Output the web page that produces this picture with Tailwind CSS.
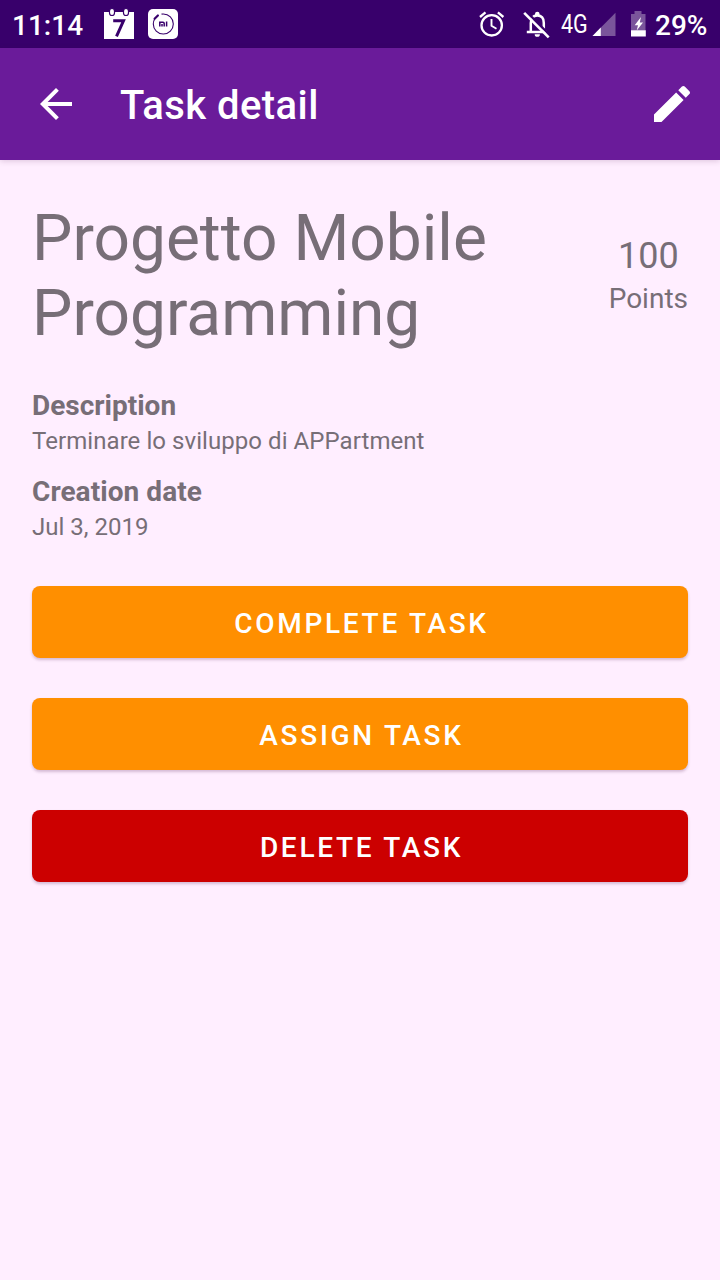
<!DOCTYPE html>
<html lang="it">
<head>
<meta charset="utf-8">
<title>Task detail</title>
<script src="https://cdn.jsdelivr.net/npm/@tailwindcss/browser@4"></script>
</head>
<body class="flex h-[1280px] w-[720px] flex-col overflow-hidden bg-[#ffeeff] font-['Roboto',sans-serif] text-[#776e77]">
  <!-- Status bar -->
  <div class="flex h-12 shrink-0 items-center justify-between bg-[#38006b] text-white">
    <div class="flex items-center pl-3">
      <span class="w-[92px] pt-0.5 text-[28px] leading-[33px] font-medium">11:14</span>
      <svg class="h-12 w-[30px]" viewBox="104 0 30 48">
        <path d="M104 12h30v27h-30z" fill="#fff"/>
        <rect x="109.5" y="8.500" width="5" height="7" rx="2.5" fill="#fff" stroke="#38006b" stroke-width="1.2"/>
        <rect x="123.500" y="8.500" width="5" height="7" rx="2.5" fill="#fff" stroke="#38006b" stroke-width="1.2"/>
        <path d="M113.200 20.800H123.500L116.500 36.300" fill="none" stroke="#38006b" stroke-width="3"/>
      </svg>
      <svg class="ml-3.5 h-12 w-[30px]" viewBox="148 0 30 48">
        <rect x="148" y="9" width="30" height="30" rx="5" fill="#fff"/>
        <circle cx="163.300" cy="24" r="10" fill="none" stroke="#38006b" stroke-width="1.100" stroke-dasharray="36.500 8.500 17.800 0"/>
        <path d="M154.600 18.800l3.300-3.300" stroke="#38006b" stroke-width="2.200" stroke-linecap="round"/>
        <path d="M159.800 26.500V22.300H163Q164.200 22.300 164.200 23.500V26.500M162 24v2.500M166.600 21.500v5" fill="none" stroke="#38006b" stroke-width="1.500"/>
      </svg>
    </div>
    <div class="flex items-center pr-3">
      <svg class="h-12 w-[26px]" viewBox="479 0 26 48" fill="none" stroke="#fff">
        <circle cx="491.700" cy="25.300" r="10.200" stroke-width="2.300"/>
        <path d="M491.500 19v6.800l5 3" stroke-width="1.900"/>
        <path d="M480 17l5.500-4.600M503.400 17l-5.500-4.600" stroke-width="2.300"/>
      </svg>
      <svg class="ml-[18px] h-12 w-[28px]" viewBox="523 0 28 48">
        <path d="M530.800 31.500V23Q530.800 15.500 537.300 15.500T543.800 23V31.500M526.800 32H547" fill="none" stroke="#fff" stroke-width="2.500"/>
        <path d="M535 15.500v-1.500a2.300 2.300 0 0 1 4.600 0v1.500zM534.700 34.200h5.200a2.600 2.600 0 0 1-5.200 0z" fill="#fff"/>
        <path d="M526.500 11.800l23.500 23.500" stroke="#38006b" stroke-width="2.500"/>
        <path d="M524.200 12.800l24.500 24.500" stroke="#fff" stroke-width="2.600"/>
      </svg>
      <span class="ml-[10px] w-[31px] origin-left scale-x-[0.86] pt-0.5 text-[25px] leading-[30px] whitespace-nowrap">4G</span>
      <svg class="h-12 w-6" viewBox="592 0 24 48">
        <path d="M615.500 12.800V36h-23z" fill="#7a559b"/>
        <path d="M600.800 27.600V36h-8.300z" fill="#fff"/>
      </svg>
      <svg class="ml-[14px] h-12 w-4" viewBox="630 0 16 48">
        <path d="M631 14h3.500v-3h7v3h4v17h-14.500z" fill="#7a559b"/>
        <path d="M631 30.300h14.800v6.200H631z" fill="#fff"/>
        <path d="M641 17l-6.300 8.300h3.300l-1.300 5.200 6.300-8h-3.200z" fill="#fff"/>
      </svg>
      <span class="ml-[9px] w-[53px] pt-0.5 text-[28px] leading-[33px] font-medium whitespace-nowrap">29%</span>
    </div>
  </div>

  <!-- App bar -->
  <header class="flex h-28 shrink-0 items-center bg-[#6a1b9a] pr-6 pl-8 text-white shadow-[0_1px_6px_rgba(60,0,60,0.18)]">
    <svg class="size-12" viewBox="0 0 24 24" fill="#fff"><path d="M20 11H7.830l5.590-5.590L12 4l-8 8 8 8 1.410-1.410L7.830 13H20v-2z"/></svg>
    <h1 class="ml-10 grow pt-[3px] text-[40px] leading-[47px] font-medium tracking-[0.45px]">Task detail</h1>
    <svg class="size-12" viewBox="0 0 24 24" fill="#fff"><path d="M3 17.250V21h3.750L17.810 9.940l-3.750-3.750L3 17.250zM20.710 7.040c.390-.390.390-1.020 0-1.410l-2.340-2.340c-.390-.390-1.020-.390-1.410 0l-1.830 1.830 3.750 3.750 1.830-1.830z"/></svg>
  </header>

  <main class="flex flex-col px-8 pt-[41px]">
    <div class="flex items-center justify-between">
      <h2 class="text-[64px] leading-[75px]">Progetto Mobile<br>Programming</h2>
      <div class="flex flex-col items-center gap-[5px] pb-0.5">
        <span class="text-[36px] leading-[42px]">100</span>
        <span class="text-[28px] leading-[33px]">Points</span>
      </div>
    </div>

    <dl class="mt-[38px]">
      <dt class="text-[28px] leading-[33px] font-bold">Description</dt>
      <dd class="mt-[5px] text-[24px] leading-[28px] tracking-[0.06px]">Terminare lo sviluppo di APPartment</dd>
      <dt class="mt-[20px] text-[28px] leading-[33px] font-bold tracking-[0.06px]">Creation date</dt>
      <dd class="mt-[5px] text-[24px] leading-[28px]">Jul 3, 2019</dd>
    </dl>

    <div class="mt-[45px] flex flex-col gap-10 text-[28px] leading-[33px] font-medium tracking-[2.7px] text-white">
      <button class="h-[72px] rounded-lg bg-[#ff8f00] pt-0.5 pl-[3px] shadow-[0_2px_3px_rgba(60,0,60,0.22)]">COMPLETE TASK</button>
      <button class="h-[72px] rounded-lg bg-[#ff8f00] pt-0.5 pl-[3px] shadow-[0_2px_3px_rgba(60,0,60,0.22)]">ASSIGN TASK</button>
      <button class="h-[72px] rounded-lg bg-[#cc0000] pt-0.5 pl-[3px] shadow-[0_2px_3px_rgba(60,0,60,0.22)]">DELETE TASK</button>
    </div>
  </main>
</body>
</html>
